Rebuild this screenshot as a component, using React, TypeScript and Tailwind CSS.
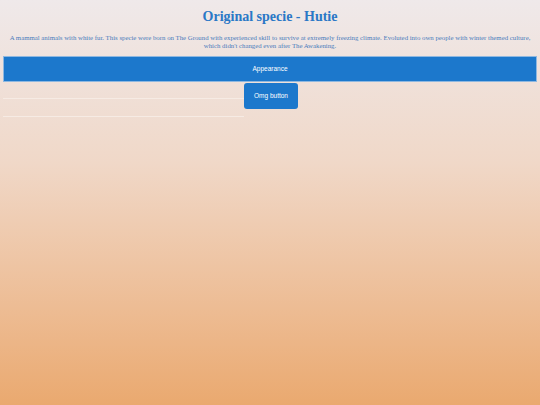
import React from 'react';

const App: React.FC = () => {
  return (
    <div className="min-h-screen w-full bg-gradient-to-b from-[#efe9ea] via-[#f0d8c8] via-40% to-[#eaa96f] px-[3px] pt-[8px]">
      <h1 className="text-center font-['Liberation_Serif',serif] text-[14px] font-bold leading-[18px] text-[#2a78c6]">
        Original specie - Hutie
      </h1>
      <p className="mx-auto mt-[8px] w-full text-center font-['Liberation_Serif',serif] text-[6.8px] leading-[8px] text-[#4a7cbc]">
        A mammal animals with white fur. This specie were born on The Ground with experienced skill to survive at extremely freezing climate. Evoluted into own people with winter themed culture, which didn't changed even after The Awakening.
      </p>
      <div className="mt-[6px] flex h-[26px] items-center justify-center border border-[#8fb8e0] bg-[#1c78cc] font-['Liberation_Sans',sans-serif] text-[6.5px] text-white">
        Appearance
      </div>
      <div className="mt-[1px] flex items-start">
        <div className="mt-[15px] h-[19px] w-[241px] border-y border-[#f6ebe4]" />
        <button className="flex h-[26px] w-[54px] items-center justify-center rounded-[3px] bg-[#1c78cc] font-['Liberation_Sans',sans-serif] text-[6.5px] text-white">
          Omg button
        </button>
      </div>
    </div>
  );
};

export default App;
